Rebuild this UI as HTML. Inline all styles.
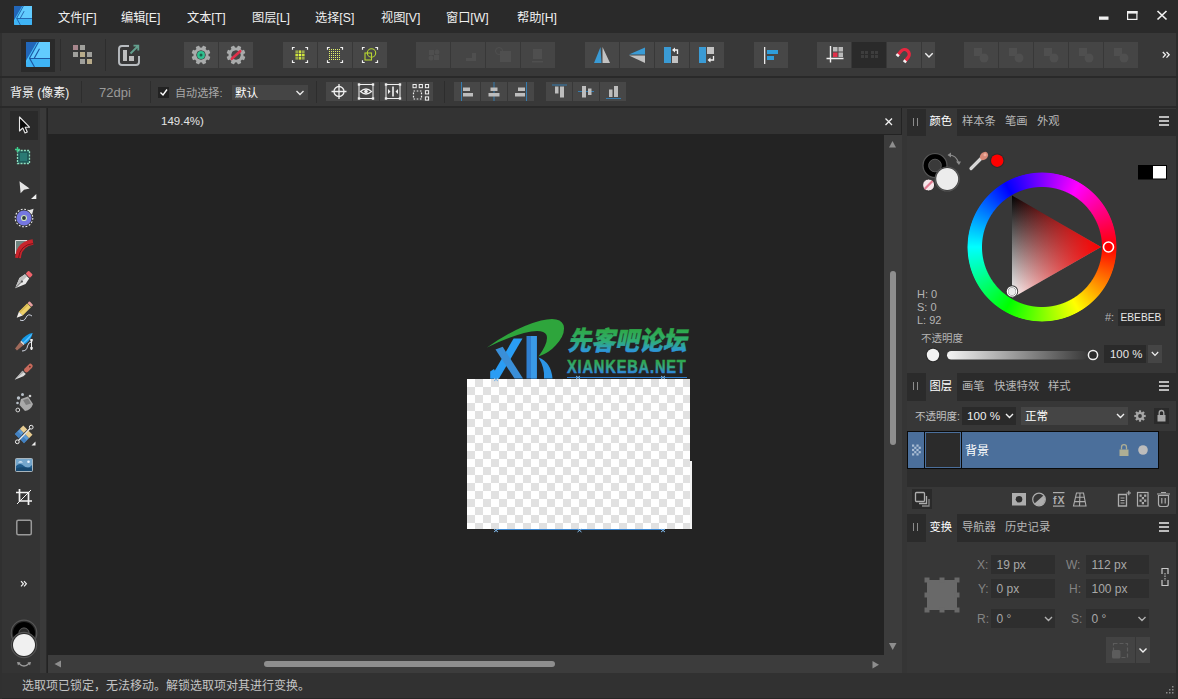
<!DOCTYPE html>
<html lang="zh-CN">
<head>
<meta charset="utf-8">
<title>Affinity Designer</title>
<style>
*{box-sizing:border-box;margin:0;padding:0}
html,body{width:1178px;height:699px;overflow:hidden;background:#383838}
body{position:relative;font-family:"Liberation Sans","Noto Sans CJK SC",sans-serif;font-size:12px;color:#e0e0e0}
.abs{position:absolute}
#titlebar{left:0;top:0;width:1178px;height:33px;background:#2a2a2a}
#titlebar .menu{position:absolute;top:10px;font-size:12.200px;line-height:16px;color:#f0f0f0;white-space:nowrap}
#toolbar{left:0;top:33px;width:1178px;height:43px;background:#383838}
#tbline{left:0;top:76px;width:1178px;height:2px;background:#292929;z-index:3}
#ctx{left:0;top:77px;width:1178px;height:29px;background:#383838}
#ctxline{left:0;top:106px;width:1178px;height:2px;background:#292929;z-index:3}
.btn{position:absolute;top:9px;height:26px;width:33px;background:#474747}
.btn.dis{background:#454545}
.cbtn{position:absolute;top:5px;height:19px;width:26px;background:#474747}
.sep{position:absolute;width:1px;background:#2d2d2d}
#tools{left:0;top:107px;width:47px;height:566px;background:linear-gradient(90deg,#343434 0,#343434 40px,#3a3a3a 40px,#3a3a3a 45.500px,#2b2b2b 45.500px)}
#canvaswrap{left:47px;top:107px;width:855px;height:566px;background:#232323}
#docbar{left:48px;top:108px;width:853px;height:26px;background:#333}
#vscroll{left:884px;top:135px;width:18px;height:520px;background:#3c3c3c}
#hscroll{left:48px;top:655px;width:836px;height:18px;background:#3c3c3c}
#corner{left:884px;top:655px;width:18px;height:18px;background:#3c3c3c}
#right{left:907px;top:107px;width:271px;height:566px;background:#373737}
#status{left:0;top:673px;width:1178px;height:26px;background:#313131}
.tabstrip{position:absolute;left:0;width:271px;height:28px;background:#2b2b2b}
.tab{position:absolute;top:0;height:28px;line-height:27px;font-size:11.300px;color:#b8b8b8;white-space:nowrap}
.tab.on{background:#373737;color:#fff;padding:0 4px}
#checker{background:conic-gradient(#e1e1e1 25%,#fff 0 50%,#e1e1e1 0 75%,#fff 0) 0 0/16px 16px}
.field{position:absolute;background:#2c2c2c;color:#e6e6e6;font-size:12px;line-height:20px;height:20px;padding-left:6px;white-space:nowrap}
.lbl{position:absolute;font-size:12px;color:#9a9a9a;white-space:nowrap}
</style>
</head>
<body>
<div id="titlebar" class="abs">
  <svg class="abs" style="left:14px;top:6px" width="18" height="19" viewBox="0 0 24 24" preserveAspectRatio="none">
<rect x="0" y="0" width="24" height="24" rx="1.500" fill="#45c1fb"/>
<path d="M0 0H11L0 18Z" fill="#2266b8"/>
<path d="M12.500 0H24V15.500H4Z" fill="#62ccff"/>
<path d="M3.500 16H24V22.500Q24 24 22.500 24H1.500Q0 24 0 22.500V20Z" fill="#3fb4f5"/>
<path d="M12.500 0L3.500 15.500L8.500 24M3.800 15.800H24M13.500 6.500L8.300 15.500" stroke="#1d58a4" stroke-width="1.100" fill="none"/>
</svg>
  <span class="menu" style="left:58px">文件[F]</span>
  <span class="menu" style="left:121px">编辑[E]</span>
  <span class="menu" style="left:187px">文本[T]</span>
  <span class="menu" style="left:252px">图层[L]</span>
  <span class="menu" style="left:315px">选择[S]</span>
  <span class="menu" style="left:381px">视图[V]</span>
  <span class="menu" style="left:446px">窗口[W]</span>
  <span class="menu" style="left:517px">帮助[H]</span>
<svg class="abs" style="left:1090px;top:0" width="88" height="33"><rect x="9" y="16.500" width="9.500" height="3.300" fill="#f0f0f0"/><rect x="37.600" y="11.600" width="9.300" height="7.800" fill="none" stroke="#f0f0f0" stroke-width="1.200"/><rect x="37" y="11" width="10.500" height="2.600" fill="#f0f0f0"/><path d="M67.500 11L76.500 19.500M76.500 11L67.500 19.500" stroke="#f0f0f0" stroke-width="1.700"/></svg>
</div>
<div id="toolbar" class="abs">
<div class="abs" style="left:21px;top:6px;width:34px;height:33px;background:#2a2a2a"></div>
<svg class="abs" style="left:26px;top:9px" width="24" height="25" viewBox="0 0 24 24" preserveAspectRatio="none">
<rect x="0" y="0" width="24" height="24" rx="1.500" fill="#45c1fb"/>
<path d="M0 0H11L0 18Z" fill="#2266b8"/>
<path d="M12.500 0H24V15.500H4Z" fill="#62ccff"/>
<path d="M3.500 16H24V22.500Q24 24 22.500 24H1.500Q0 24 0 22.500V20Z" fill="#3fb4f5"/>
<path d="M12.500 0L3.500 15.500L8.500 24M3.800 15.800H24M13.500 6.500L8.300 15.500" stroke="#1d58a4" stroke-width="1.100" fill="none"/>
</svg>
<div class="sep" style="left:60px;top:6px;height:32px"></div>
<div class="sep" style="left:105px;top:6px;height:32px"></div>
<svg class="abs" style="left:0;top:0" width="160" height="43"><rect x="73" y="12" width="5" height="5" fill="#a8868c"/><rect x="80" y="12" width="5" height="5" fill="#a0a09c"/><rect x="73" y="19" width="5" height="5" fill="#a0a09c"/><rect x="80" y="19" width="5" height="5" fill="#b8ab8a"/><rect x="87" y="19" width="5" height="5" fill="#a0a09c"/><rect x="80" y="26" width="5" height="5" fill="#a0a09c"/><rect x="87" y="26" width="5" height="5" fill="#b8ab8a"/><path d="M129 13H122Q119 13 119 16V29Q119 32 122 32H136Q139 32 139 29V23" fill="none" stroke="#b8bcc0" stroke-width="1.9"/><rect x="123" y="17" width="4" height="11" fill="#bdbdbd"/><rect x="129" y="23" width="5" height="5" fill="#bdbdbd"/><path d="M130.500 20.500L138 13M133.500 12.700H138.300V17.500" fill="none" stroke="#63a08e" stroke-width="1.800"/></svg>
<div class="btn " style="left:184px;width:34px"></div>
<div class="btn " style="left:219px;width:34px"></div>
<div class="btn " style="left:283px;width:34px"></div>
<div class="btn " style="left:318px;width:34px"></div>
<div class="btn " style="left:353px;width:34px"></div>
<div class="btn " style="left:585px;width:34px"></div>
<div class="btn " style="left:620px;width:34px"></div>
<div class="btn " style="left:655px;width:34px"></div>
<div class="btn " style="left:690px;width:34px"></div>
<div class="btn " style="left:754px;width:34px"></div>
<div class="btn " style="left:817px;width:34px"></div>
<div class="btn " style="left:887px;width:34px"></div>
<div class="btn dis" style="left:416px;width:34px"></div>
<div class="btn dis" style="left:451px;width:34px"></div>
<div class="btn dis" style="left:486px;width:34px"></div>
<div class="btn dis" style="left:521px;width:34px"></div>
<div class="btn dis" style="left:964px;width:34px"></div>
<div class="btn dis" style="left:999px;width:34px"></div>
<div class="btn dis" style="left:1034px;width:34px"></div>
<div class="btn dis" style="left:1069px;width:34px"></div>
<div class="btn dis" style="left:1104px;width:34px"></div>
<div class="btn" style="left:852px;width:34px;background:#2a2a2a"></div>
<div class="btn" style="left:922px;width:13px"></div>
<svg id="tbicons" class="abs" style="left:0;top:0" width="1178" height="43"><rect x="199.1" y="12.6" width="3.800" height="4.500" rx="0.700" fill="#a9abab" transform="rotate(22.5 201 22)"/><rect x="199.1" y="12.6" width="3.800" height="4.500" rx="0.700" fill="#a9abab" transform="rotate(67.5 201 22)"/><rect x="199.1" y="12.6" width="3.800" height="4.500" rx="0.700" fill="#a9abab" transform="rotate(112.5 201 22)"/><rect x="199.1" y="12.6" width="3.800" height="4.500" rx="0.700" fill="#a9abab" transform="rotate(157.5 201 22)"/><rect x="199.1" y="12.6" width="3.800" height="4.500" rx="0.700" fill="#a9abab" transform="rotate(202.5 201 22)"/><rect x="199.1" y="12.6" width="3.800" height="4.500" rx="0.700" fill="#a9abab" transform="rotate(247.5 201 22)"/><rect x="199.1" y="12.6" width="3.800" height="4.500" rx="0.700" fill="#a9abab" transform="rotate(292.5 201 22)"/><rect x="199.1" y="12.6" width="3.800" height="4.500" rx="0.700" fill="#a9abab" transform="rotate(337.5 201 22)"/><circle cx="201" cy="22" r="6.200" fill="none" stroke="#a9abab" stroke-width="2.800"/><circle cx="201" cy="22" r="3.900" fill="#2fbf8f"/><circle cx="201" cy="22" r="1.500" fill="#1d5f4b"/><rect x="234.1" y="12.6" width="3.800" height="4.500" rx="0.700" fill="#a9abab" transform="rotate(22.5 236 22)"/><rect x="234.1" y="12.6" width="3.800" height="4.500" rx="0.700" fill="#a9abab" transform="rotate(67.5 236 22)"/><rect x="234.1" y="12.6" width="3.800" height="4.500" rx="0.700" fill="#a9abab" transform="rotate(112.5 236 22)"/><rect x="234.1" y="12.6" width="3.800" height="4.500" rx="0.700" fill="#a9abab" transform="rotate(157.5 236 22)"/><rect x="234.1" y="12.6" width="3.800" height="4.500" rx="0.700" fill="#a9abab" transform="rotate(202.5 236 22)"/><rect x="234.1" y="12.6" width="3.800" height="4.500" rx="0.700" fill="#a9abab" transform="rotate(247.5 236 22)"/><rect x="234.1" y="12.6" width="3.800" height="4.500" rx="0.700" fill="#a9abab" transform="rotate(292.5 236 22)"/><rect x="234.1" y="12.6" width="3.800" height="4.500" rx="0.700" fill="#a9abab" transform="rotate(337.5 236 22)"/><circle cx="236" cy="22" r="6.200" fill="none" stroke="#a9abab" stroke-width="2.800"/><path d="M231.800 25.800L240.200 18.200" stroke="#e0304a" stroke-width="2.600" stroke-linecap="round"/><path d="M294.7 14.5H292.5V16.7M294.7 29.5H292.5V27.3M305.3 14.5H307.5V16.7M305.3 29.5H307.5V27.3" fill="none" stroke="#f4f4f4" stroke-width="1.2"/><rect x="295.4" y="17.4" width="2.600" height="2.600" fill="#9aa84e"/><rect x="295.4" y="20.7" width="2.600" height="2.600" fill="#cfe63a"/><rect x="295.4" y="24.0" width="2.600" height="2.600" fill="#9aa84e"/><rect x="298.7" y="17.4" width="2.600" height="2.600" fill="#cfe63a"/><rect x="298.7" y="20.7" width="2.600" height="2.600" fill="#eaff50"/><rect x="298.7" y="24.0" width="2.600" height="2.600" fill="#cfe63a"/><rect x="302.0" y="17.4" width="2.600" height="2.600" fill="#9aa84e"/><rect x="302.0" y="20.7" width="2.600" height="2.600" fill="#cfe63a"/><rect x="302.0" y="24.0" width="2.600" height="2.600" fill="#9aa84e"/><path d="M329.7 14.5H327.5V16.7M329.7 29.5H327.5V27.3M340.3 14.5H342.5V16.7M340.3 29.5H342.5V27.3" fill="none" stroke="#f4f4f4" stroke-width="1.2"/><rect x="329" y="16" width="1" height="1" fill="#e2f26a"/><rect x="329" y="18" width="1" height="1" fill="#e2f26a"/><rect x="329" y="20" width="1" height="1" fill="#e2f26a"/><rect x="329" y="22" width="1" height="1" fill="#e2f26a"/><rect x="329" y="24" width="1" height="1" fill="#e2f26a"/><rect x="329" y="26" width="1" height="1" fill="#e2f26a"/><rect x="331" y="16" width="1" height="1" fill="#e2f26a"/><rect x="331" y="18" width="1" height="1" fill="#e2f26a"/><rect x="331" y="20" width="1" height="1" fill="#e2f26a"/><rect x="331" y="22" width="1" height="1" fill="#e2f26a"/><rect x="331" y="24" width="1" height="1" fill="#e2f26a"/><rect x="331" y="26" width="1" height="1" fill="#e2f26a"/><rect x="333" y="16" width="1" height="1" fill="#e2f26a"/><rect x="333" y="18" width="1" height="1" fill="#e2f26a"/><rect x="333" y="20" width="1" height="1" fill="#e2f26a"/><rect x="333" y="22" width="1" height="1" fill="#e2f26a"/><rect x="333" y="24" width="1" height="1" fill="#e2f26a"/><rect x="333" y="26" width="1" height="1" fill="#e2f26a"/><rect x="335" y="16" width="1" height="1" fill="#e2f26a"/><rect x="335" y="18" width="1" height="1" fill="#e2f26a"/><rect x="335" y="20" width="1" height="1" fill="#e2f26a"/><rect x="335" y="22" width="1" height="1" fill="#e2f26a"/><rect x="335" y="24" width="1" height="1" fill="#e2f26a"/><rect x="335" y="26" width="1" height="1" fill="#e2f26a"/><rect x="337" y="16" width="1" height="1" fill="#e2f26a"/><rect x="337" y="18" width="1" height="1" fill="#e2f26a"/><rect x="337" y="20" width="1" height="1" fill="#e2f26a"/><rect x="337" y="22" width="1" height="1" fill="#e2f26a"/><rect x="337" y="24" width="1" height="1" fill="#e2f26a"/><rect x="337" y="26" width="1" height="1" fill="#e2f26a"/><rect x="339" y="16" width="1" height="1" fill="#e2f26a"/><rect x="339" y="18" width="1" height="1" fill="#e2f26a"/><rect x="339" y="20" width="1" height="1" fill="#e2f26a"/><rect x="339" y="22" width="1" height="1" fill="#e2f26a"/><rect x="339" y="24" width="1" height="1" fill="#e2f26a"/><rect x="339" y="26" width="1" height="1" fill="#e2f26a"/><path d="M364.7 14.5H362.5V16.7M364.7 29.5H362.5V27.3M375.3 14.5H377.5V16.7M375.3 29.5H377.5V27.3" fill="none" stroke="#f4f4f4" stroke-width="1.2"/><rect x="365" y="20" width="6.500" height="7" fill="none" stroke="#b7d532" stroke-width="1.1"/><circle cx="371.5" cy="20" r="4.200" fill="none" stroke="#b7d532" stroke-width="1.1"/><rect x="429" y="17" width="5" height="5" fill="#4f4f4f"/><rect x="434" y="22" width="5" height="5" fill="#4f4f4f"/><circle cx="431" cy="25" r="2.500" fill="#4f4f4f"/><circle cx="437" cy="19" r="2.500" fill="#4f4f4f"/><rect x="472" y="20" width="4" height="8" fill="#4f4f4f"/><rect x="466" y="25" width="6" height="3" fill="#4f4f4f"/><rect x="500" y="18" width="11" height="11" fill="#4f4f4f"/><circle cx="499" cy="18" r="3.500" fill="none" stroke="#4f4f4f" stroke-width="1"/><rect x="533" y="16" width="9" height="10" fill="#4f4f4f"/><rect x="532" y="28" width="11" height="1.500" fill="#4f4f4f"/><rect x="974" y="15" width="8" height="8" fill="#4f4f4f"/><circle cx="984" cy="25" r="4.500" fill="#4f4f4f"/><rect x="1009" y="15" width="8" height="8" fill="#4f4f4f"/><circle cx="1019" cy="25" r="4.500" fill="#4f4f4f"/><rect x="1044" y="15" width="8" height="8" fill="#4f4f4f"/><circle cx="1054" cy="25" r="4.500" fill="#4f4f4f"/><rect x="1079" y="15" width="8" height="8" fill="#4f4f4f"/><circle cx="1089" cy="25" r="4.500" fill="#4f4f4f"/><rect x="1114" y="15" width="8" height="8" fill="#4f4f4f"/><circle cx="1124" cy="25" r="4.500" fill="#4f4f4f"/><path d="M600.500 14L601.500 30H594Z" fill="#3a9bd5"/><path d="M602.500 14L610 30H602.500Z" fill="#c2c2c2"/><path d="M645 14.500V21.500L629 21.500Z" fill="#3a9bd5"/><path d="M645 22.500V30L629 22.500Z" fill="#c2c2c2"/><rect x="664" y="14" width="7" height="16" fill="#3a9bd5"/><rect x="672" y="23" width="6" height="7" fill="#c2c2c2"/><path d="M677.500 21V17H673.500" fill="none" stroke="#f0f0f0" stroke-width="1.3"/><path d="M672 17L675 14.500V19.500Z" fill="#f0f0f0"/><rect x="699" y="14" width="7" height="16" fill="#3a9bd5"/><rect x="707" y="14" width="7" height="7" fill="#c2c2c2"/><path d="M713.500 23V27H709.500" fill="none" stroke="#f0f0f0" stroke-width="1.3"/><path d="M707.500 27L710.500 24.500V29.500Z" fill="#f0f0f0"/><rect x="764" y="14" width="1.300" height="17" fill="#e8e8e8"/><rect x="767" y="17" width="11" height="4" fill="#2f9edb"/><rect x="767" y="23" width="7" height="4" fill="#2f9edb"/><path d="M830.500 13V29.500M826.500 25.500H843.500" stroke="#f0f0f0" stroke-width="1.400" fill="none"/><rect x="833" y="14" width="4.500" height="4.500" fill="#b9b9b9"/><rect x="838.500" y="14" width="4.500" height="4.500" fill="#b9b9b9"/><rect x="833" y="19.500" width="4.500" height="4.500" fill="#e0304a"/><rect x="838.500" y="19.500" width="4.500" height="4.500" fill="#b9b9b9"/><g fill="#3d3d3d"><rect x="861" y="18" width="3" height="3"/><rect x="865" y="18" width="3" height="3"/><rect x="861" y="22" width="3" height="3"/><rect x="865" y="22" width="3" height="3"/><rect x="871" y="18" width="3" height="3"/><rect x="875" y="18" width="3" height="3"/><rect x="871" y="22" width="3" height="3"/><rect x="875" y="22" width="3" height="3"/></g><g transform="translate(904 22) rotate(40) scale(.86) translate(-904 -22)"><path d="M898.500 27V21A5.500 5.500 0 0 1 909.500 21V27" fill="none" stroke="#e8263f" stroke-width="3.800"/><rect x="896.600" y="25.500" width="3.800" height="2.800" fill="#f2f2f2"/><rect x="907.600" y="25.500" width="3.800" height="2.800" fill="#f2f2f2"/></g><path d="M925.300 20.300L929 24L932.700 20.300" fill="none" stroke="#f0f0f0" stroke-width="1.400"/><path d="M1162.800 19L1165.500 21.800L1162.800 24.600M1166.500 19L1169.200 21.800L1166.500 24.600" fill="none" stroke="#f0f0f0" stroke-width="1.300"/></svg>
</div>
<div id="tbline" class="abs"></div>
<div id="ctx" class="abs">
<span class="abs" style="left:10px;top:7px;font-size:12px;line-height:18px;color:#f2f2f2;white-space:nowrap">背景 (像素)</span>
<div class="sep" style="left:81px;top:4px;height:22px"></div>
<span class="abs" style="left:99px;top:7px;font-size:13px;line-height:18px;color:#9a9a9a;white-space:nowrap">72dpi</span>
<div class="sep" style="left:150px;top:4px;height:22px"></div>
<div class="abs" style="left:158px;top:10px;width:11px;height:11px;background:#222"></div>
<span class="abs" style="left:175px;top:7px;font-size:11.100px;line-height:18px;color:#a8a8a8;white-space:nowrap">自动选择:</span>
<div class="abs" style="left:232px;top:8px;width:76px;height:15px;background:#454545"></div>
<span class="abs" style="left:235px;top:7px;font-size:11.600px;line-height:18px;color:#fff;white-space:nowrap">默认</span>
<div class="sep" style="left:316px;top:4px;height:22px"></div>
<div class="sep" style="left:444px;top:4px;height:22px"></div>
<div class="cbtn" style="left:326px"></div>
<div class="cbtn" style="left:353px"></div>
<div class="cbtn" style="left:380px"></div>
<div class="cbtn" style="left:407px"></div>
<div class="cbtn" style="left:454px"></div>
<div class="cbtn" style="left:481px"></div>
<div class="cbtn" style="left:508px"></div>
<div class="cbtn" style="left:546px"></div>
<div class="cbtn" style="left:573px"></div>
<div class="cbtn" style="left:600px"></div>
<svg class="abs" style="left:0;top:0" width="1178" height="29"><path d="M160.500 15.500L163 18L167 12.500" fill="none" stroke="#fff" stroke-width="1.4"/><path d="M296.500 14L300 17.500L303.500 14" fill="none" stroke="#e8e8e8" stroke-width="1.4"/><circle cx="339" cy="14.500" r="5" fill="none" stroke="#f0f0f0" stroke-width="1.3"/><path d="M339 7V22M331.500 14.500H346.500" stroke="#f0f0f0" stroke-width="1.300"/><rect x="359" y="7.5" width="14" height="14" fill="none" stroke="#f0f0f0" stroke-width="1"/><rect x="357.8" y="6.3" width="2.400" height="2.400" fill="#f0f0f0"/><rect x="357.8" y="20.3" width="2.400" height="2.400" fill="#f0f0f0"/><rect x="371.8" y="6.3" width="2.400" height="2.400" fill="#f0f0f0"/><rect x="371.8" y="20.3" width="2.400" height="2.400" fill="#f0f0f0"/><path d="M360.500 14.500Q366 9.500 371.500 14.500Q366 19.500 360.500 14.500Z" fill="none" stroke="#f0f0f0" stroke-width="1.200"/><circle cx="366" cy="14.500" r="1.800" fill="#f0f0f0"/><rect x="386" y="7.5" width="14" height="14" fill="none" stroke="#f0f0f0" stroke-width="1"/><rect x="384.8" y="6.3" width="2.400" height="2.400" fill="#f0f0f0"/><rect x="384.8" y="20.3" width="2.400" height="2.400" fill="#f0f0f0"/><rect x="398.8" y="6.3" width="2.400" height="2.400" fill="#f0f0f0"/><rect x="398.8" y="20.3" width="2.400" height="2.400" fill="#f0f0f0"/><rect x="392.200" y="9.500" width="1.600" height="10" fill="#f0f0f0"/><path d="M388 12L390.500 14.500L388 17ZM398 12L395.500 14.500L398 17Z" fill="#f0f0f0"/><rect x="413.0" y="7.500" width="3.200" height="3.200" fill="none" stroke="#f0f0f0" stroke-width="1"/><rect x="419.2" y="7.500" width="3.200" height="3.200" fill="none" stroke="#f0f0f0" stroke-width="1"/><rect x="425.4" y="7.500" width="3.200" height="3.200" fill="none" stroke="#f0f0f0" stroke-width="1"/><rect x="425.4" y="13.7" width="3.200" height="3.200" fill="none" stroke="#f0f0f0" stroke-width="1"/><rect x="425.4" y="19.9" width="3.200" height="3.200" fill="none" stroke="#f0f0f0" stroke-width="1"/><rect x="413.500" y="14" width="8" height="8" fill="none" stroke="#f0f0f0" stroke-width="1.200" stroke-dasharray="1.6 1.6"/><rect x="461" y="5" width="1" height="19" fill="#357cb0"/><rect x="463" y="10.500" width="7" height="3.500" fill="#bdbdbd"/><rect x="463" y="16" width="10" height="3.500" fill="#bdbdbd"/><rect x="493.500" y="5" width="1" height="19" fill="#357cb0"/><rect x="490.500" y="10.500" width="7" height="3.500" fill="#bdbdbd"/><rect x="488.500" y="16" width="11" height="3.500" fill="#bdbdbd"/><rect x="526" y="5" width="1" height="19" fill="#357cb0"/><rect x="518" y="10.500" width="7" height="3.500" fill="#bdbdbd"/><rect x="515" y="16" width="10" height="3.500" fill="#bdbdbd"/><rect x="552" y="7.500" width="15" height="1" fill="#357cb0"/><rect x="555" y="9.500" width="3.500" height="7" fill="#bdbdbd"/><rect x="560" y="9.500" width="4" height="11" fill="#bdbdbd"/><rect x="578" y="14" width="16" height="1" fill="#357cb0"/><rect x="582" y="9" width="4" height="11.500" fill="#bdbdbd"/><rect x="588" y="11.500" width="3.500" height="6.500" fill="#bdbdbd"/><rect x="606" y="21" width="15" height="1" fill="#357cb0"/><rect x="609" y="12.500" width="3.500" height="7.500" fill="#bdbdbd"/><rect x="614" y="9" width="4" height="11" fill="#bdbdbd"/></svg>
</div>
<div id="ctxline" class="abs"></div>
<div id="tools" class="abs"><div class="abs" style="left:10px;top:4px;width:28px;height:29px;background:#2a2a2a"></div><svg class="abs" style="left:0;top:0" width="48" height="568"><path d="M19.500 10V24L22.800 21L25 26L27.300 25L25.200 20.200000000000003H29.500Z" fill="#0a0a0a" stroke="#e8e8e8" stroke-width="1.1" stroke-linejoin="round"/><rect x="17.500" y="43.5" width="12" height="13" fill="#1f5a58" stroke="#8fe0c0" stroke-width="1.3" stroke-dasharray="2 1.2"/><rect x="20" y="46" width="7" height="8" fill="#2a7a74"/><path d="M15 42.5H20M17.500 40V45" stroke="#3fd08f" stroke-width="1.4"/><path d="M19.500 74.3L29.600 81.4L24 82.8L20.600 86.2Z" fill="#e4e4e4"/><path d="M36.300 87V92H31Z" fill="#efefef"/><circle cx="24" cy="111" r="8.800" fill="none" stroke="#e8e8e8" stroke-width="1.100" stroke-dasharray="1.800 1.650"/><circle cx="24" cy="111" r="5.200" fill="none" stroke="#7577e0" stroke-width="4.800"/><circle cx="24" cy="111" r="2.500" fill="#2e3a36" stroke="#cfe3c8" stroke-width="1.200"/><path d="M28 103.5L33.600 101.8L32 107.8Z" fill="#e6e6e6"/><path d="M15.500 133.5H27L15.500 147Z" fill="#6f8480" stroke="#e0e0e0" stroke-width="1"/><path d="M18 151Q19 137 33 135" fill="none" stroke="#c8242c" stroke-width="5.800"/><path d="M18.500 151Q20 138 33 136.5" fill="none" stroke="#7e1218" stroke-width="1"/><g transform="translate(15.500 180.5) scale(.86) translate(-15.500 -180.5) rotate(45 24 172.5)"><rect x="20.500" y="159.5" width="7" height="5" rx="1.2" fill="#f0646c"/><path d="M20.500 165.5H27.500L29 173L24 185L19 173Z" fill="#e9e9e9"/><path d="M24 185L19 173L20.500 165.5H24Z" fill="#bdbdbd"/><path d="M24 184V175" stroke="#555" stroke-width="1"/><circle cx="24" cy="174" r="1.300" fill="#555"/></g><g transform="translate(16.500 210.5) scale(.9) translate(-16.500 -210.5) rotate(45 24.500 203)"><rect x="21.500" y="191" width="6" height="3" rx="1" fill="#e8a0a0"/><rect x="21.500" y="194.5" width="6" height="13" fill="#ecd06a"/><rect x="21.500" y="194.5" width="2" height="13" fill="#d8b850"/><path d="M21.500 207.5H27.500L24.500 214Z" fill="#f3f0ea"/></g><path d="M20 213Q24 215 26 210.5T32 209" fill="none" stroke="#cfd4e0" stroke-width="1"/><g transform="translate(16 242) scale(.9) translate(-16 -242) rotate(45 24.500 234)"><path d="M24.500 220Q29 226 27.500 235H21.500Q20 226 24.500 220Z" fill="#159be8"/><path d="M24.500 220Q27 226 26 235H24.500Z" fill="#5fc0ff"/><rect x="22" y="235" width="5" height="2" fill="#d8d8d8"/><path d="M22 237H27L26 246H23Z" fill="#a06a5a"/></g><path d="M22 244Q27 244 27.500 239Q28.500 235 31.500 235" fill="none" stroke="#d6dae6" stroke-width="1"/><rect x="30.300" y="232" width="2.400" height="2.400" fill="#f0f0f0"/><rect x="30.300" y="240" width="2.400" height="2.400" fill="#f0f0f0"/><path d="M31.500 233V243" stroke="#f0f0f0" stroke-width="1"/><g transform="translate(24 266) scale(.85) translate(-24 -266) rotate(45 24 265)"><rect x="21.500" y="252" width="5.500" height="12" rx="2.600" fill="#c86a5c"/><circle cx="24.200" cy="255.5" r="1" fill="#5a2a22"/><path d="M21.500 265H27V269L22.500 279Z" fill="#dcdcdc"/><path d="M21.500 265H24L22.500 279Z" fill="#a8a8a8"/></g><path d="M21 292L28 289.5L33 297Q31 303 25 304L19.500 298Z" fill="#a9a9a9"/><path d="M23 293L28 291.5L31 296.5L26 298Z" fill="#7d7d7d"/><circle cx="18.500" cy="291" r="1.700" fill="#b8c0c8"/><circle cx="22.500" cy="287.5" r="1.500" fill="#b8c0c8"/><circle cx="17.500" cy="296" r="1.300" fill="#b8c0c8"/><circle cx="30" cy="289" r="1.300" fill="#d0d0d0"/><circle cx="17.800" cy="303" r="1.900" fill="none" stroke="#d8d8d8" stroke-width="1"/><g transform="rotate(45 24 327)"><rect x="17.500" y="321.5" width="5.500" height="5" fill="#e8cd92"/><rect x="17.500" y="326.5" width="5.500" height="7" fill="#5c9ad6"/><rect x="25" y="321.5" width="5.500" height="5" fill="#e8cd92"/><rect x="25" y="326.5" width="5.500" height="7" fill="#5c9ad6"/><rect x="17.500" y="329.5" width="13" height="4" fill="#2f6eb0" opacity=".55"/></g><path d="M18 334L30.500 321" stroke="#f0f0f0" stroke-width="1.2"/><circle cx="17.300" cy="334.8" r="1.900" fill="#383838" stroke="#f0f0f0" stroke-width="1"/><circle cx="31.200" cy="320.2" r="1.900" fill="#383838" stroke="#f0f0f0" stroke-width="1"/><path d="M35.500 334.5V338.5H31.500Z" fill="#efefef"/><rect x="15.500" y="351.5" width="17" height="13" rx="1" fill="#74a6cc" stroke="#a8b4bc" stroke-width="1"/><path d="M16 359Q20 355 24 359T32 358V364H16Z" fill="#1e5a8a"/><path d="M16 361.5Q22 359 32 361.5V364H16Z" fill="#164870"/><circle cx="28.500" cy="354.8" r="1.300" fill="#eaf4ff"/><path d="M18 355.5Q20.500 353 23 355.5Z" fill="#eaf4ff"/><path d="M19.500 382V394H32M16 385.5H28.500V398" fill="none" stroke="#f2f2f2" stroke-width="1.700"/><path d="M17 397L31 383" stroke="#f2f2f2" stroke-width="1"/><rect x="16.800" y="413.29999999999995" width="14.500" height="14.500" rx="1.500" fill="#2c2c2c" stroke="#9a9a9a" stroke-width="1.500"/><path d="M21 474.20000000000005L23.400 476.79999999999995L21 479.4M24 474.20000000000005L26.400 476.79999999999995L24 479.4" fill="none" stroke="#f0f0f0" stroke-width="1.200"/><circle cx="24" cy="526" r="12.800" fill="#2a2a2a" stroke="#555" stroke-width="1.200"/><circle cx="24" cy="526" r="8.300" fill="none" stroke="#000" stroke-width="5.500"/><circle cx="24" cy="526" r="5" fill="none" stroke="#555" stroke-width="1"/><circle cx="24" cy="538" r="12.600" fill="#2a2a2a" stroke="#555" stroke-width="1.200"/><circle cx="24" cy="538" r="11" fill="#f0f0f0"/><path d="M18.500 556Q24 562 29.500 556" fill="none" stroke="#9a9a9a" stroke-width="1.300"/><path d="M17 555L20.500 555.5L18 558.5ZM31 555L27.500 555.5L30 558.5Z" fill="#9a9a9a"/></svg></div>
<div id="canvaswrap" class="abs"><div class="abs" id="checker" style="left:420px;top:272px;width:223px;height:150px"></div>
<div class="abs" style="left:643px;top:354px;width:2px;height:68px;background:#f2f2f2"></div>
<svg class="abs" style="left:431px;top:200px" width="270" height="230" viewBox="478 307 270 230">
<defs>
<linearGradient id="gt" x1="0" y1="0" x2="0" y2="1"><stop offset=".15" stop-color="#2ea84a"/><stop offset=".5" stop-color="#2fae70"/><stop offset=".78" stop-color="#2d9cc4"/><stop offset=".95" stop-color="#2c8cf0"/></linearGradient>
<linearGradient id="ge" x1="0" y1="0" x2="0" y2="1"><stop offset=".2" stop-color="#2fa84c"/><stop offset=".5" stop-color="#36a884"/><stop offset=".76" stop-color="#2f86d8"/></linearGradient>
</defs>
<path d="M487 347.500Q516 327 541 320.500Q560 316 563.500 325Q566 334 556 345Q549 353 538.500 356.500Q549 342 546.500 335Q543 328 524 333Q506 338 487 347.500Z" fill="#2ea53c"/>
<path d="M513.600 338.500H522.500L499 378.500H490.200Z" fill="#2a9df4"/>
<path d="M495.500 349.500L502.700 346.800L523 378.500H514.500Z" fill="#3a8fd8"/>
<path d="M490.200 378.500V371.500L494 369L499 378.500Z" fill="#2a9df4"/>
<rect x="526.500" y="336" width="10.300" height="42.500" fill="#2f7fd0"/><rect x="531" y="336" width="5.800" height="42.500" fill="#3a9ae6"/>
<path d="M538.500 357.500Q551 362 552.500 378.500H544Q545 368 538.500 357.500Z" fill="#2c95e6"/>
<text x="0" y="0" font-family="'Liberation Sans','Noto Sans CJK SC',sans-serif" font-size="26" font-weight="900" fill="url(#gt)" stroke="url(#gt)" stroke-width=".4" transform="translate(567.500 349.700) skewX(-12)" textLength="119" lengthAdjust="spacingAndGlyphs">先客吧论坛</text>
<g transform="translate(567 373.300) scale(.8 1)"><text x="0" y="0" font-family="'Liberation Sans',sans-serif" font-size="18.300" font-weight="bold" fill="url(#ge)" stroke="url(#ge)" stroke-width=".5" textLength="148.500" lengthAdjust="spacing">XIANKEBA.NET</text></g>
<path d="M567 377.500H687" stroke="#2f7fd0" stroke-width="1"/>
<path d="M496 529.500H664" stroke="#3a86d0" stroke-width="1"/>
<g stroke="#7fb8ea" stroke-width="1" fill="none">
<path d="M494 378l4 3m0-3l-4 3M576 376l4 3m0-3l-4 3M661 376l4 3m0-3l-4 3"/>
<path d="M494 529l4 3m0-3l-4 3M577.500 529l4 3m0-3l-4 3M661 529l4 3m0-3l-4 3"/>
</g>
</svg></div>
<div id="docbar" class="abs"><span class="abs" style="left:113px;top:5px;font-size:11.500px;line-height:16px;color:#e4e4e4;white-space:nowrap">149.4%)</span><svg class="abs" style="left:835px;top:8px" width="12" height="12"><path d="M2.500 2.500L9 9M9 2.500L2.500 9" stroke="#f0f0f0" stroke-width="1.300"/></svg></div>
<div id="vscroll" class="abs"><svg class="abs" style="left:0;top:0" width="17" height="520"><path d="M5 12.500H12L8.500 6Z" fill="#8e8e8e"/><path d="M5 508H12.500L8.700 515Z" fill="#8e8e8e"/><rect x="6" y="136" width="6" height="174" rx="3" fill="#8e8e8e"/></svg></div>
<div id="hscroll" class="abs"><svg class="abs" style="left:0;top:0" width="836" height="18"><path d="M13 5.500V12.500L6.500 9Z" fill="#8e8e8e"/><path d="M824.500 6V13.500L831 9.700Z" fill="#8e8e8e"/><rect x="216" y="6" width="291" height="6" rx="3" fill="#8e8e8e"/></svg></div>
<div id="corner" class="abs"></div>
<div class="abs" style="left:902px;top:108px;width:5px;height:565px;background:#353535"></div>
<div id="right" class="abs">
<div class="tabstrip" style="left:0;top:2px;height:27px"><div class="abs" style="left:6px;top:9px;width:1px;height:8px;background:#8c8c8c"></div><div class="abs" style="left:10px;top:9px;width:1px;height:8px;background:#8c8c8c"></div><div class="tab on" style="left:19px;width:31px;height:27px;line-height:25px;padding:0 0 0 3.500px">颜色</div><div class="tab" style="left:55px;height:27px;line-height:25px">样本条</div><div class="tab" style="left:98px;height:27px;line-height:25px">笔画</div><div class="tab" style="left:130px;height:27px;line-height:25px">外观</div><div class="abs" style="left:252px;top:7px;width:10px;height:2px;background:#bcbcbc;box-shadow:0 4px 0 #bcbcbc,0 8px 0 #bcbcbc"></div></div>
<div class="tabstrip" style="left:0;top:266px;height:28px"><div class="abs" style="left:6px;top:9px;width:1px;height:8px;background:#8c8c8c"></div><div class="abs" style="left:10px;top:9px;width:1px;height:8px;background:#8c8c8c"></div><div class="tab on" style="left:19px;width:31px;height:28px;line-height:26px;padding:0 0 0 3.500px">图层</div><div class="tab" style="left:55px;height:28px;line-height:26px">画笔</div><div class="tab" style="left:87px;height:28px;line-height:26px">快速特效</div><div class="tab" style="left:141px;height:28px;line-height:26px">样式</div><div class="abs" style="left:252px;top:8px;width:10px;height:2px;background:#bcbcbc;box-shadow:0 4px 0 #bcbcbc,0 8px 0 #bcbcbc"></div></div>
<div class="tabstrip" style="left:0;top:407px;height:28px"><div class="abs" style="left:6px;top:9px;width:1px;height:8px;background:#8c8c8c"></div><div class="abs" style="left:10px;top:9px;width:1px;height:8px;background:#8c8c8c"></div><div class="tab on" style="left:19px;width:31px;height:28px;line-height:26px;padding:0 0 0 3.500px">变换</div><div class="tab" style="left:55px;height:28px;line-height:26px">导航器</div><div class="tab" style="left:98px;height:28px;line-height:26px">历史记录</div><div class="abs" style="left:252px;top:8px;width:10px;height:2px;background:#bcbcbc;box-shadow:0 4px 0 #bcbcbc,0 8px 0 #bcbcbc"></div></div>
<div class="abs" style="left:60px;top:65px;width:150px;height:150px;border-radius:50%;background:conic-gradient(from 90deg,#f00,#ff0,#0f0,#0ff,#00f,#f0f,#f00);-webkit-mask:radial-gradient(circle,transparent 59.500px,#000 60.500px,#000 74px,transparent 75px);mask:radial-gradient(circle,transparent 59.500px,#000 60.500px,#000 74px,transparent 75px)"></div>
<div class="field" style="left:211px;top:202px;width:47px;height:17px;line-height:17px;padding-left:2.500px;font-size:10.200px;background:#2a2a2a">EBEBEB</div>
<div class="lbl" style="left:198px;top:202px;line-height:17px;font-size:11px;color:#b4b4b4">#:</div>
<div class="field" style="left:197px;top:238px;width:42px;height:18px;line-height:18px;padding-left:6px;font-size:11.400px;background:#2a2a2a">100 %</div>
<div class="abs" style="left:241px;top:238px;width:14px;height:18px;background:#454545"></div>
<div class="lbl" style="left:10px;top:180px;line-height:14px;font-size:11px;color:#b4b4b4">H: 0</div>
<div class="lbl" style="left:10px;top:193px;line-height:14px;font-size:11px;color:#b4b4b4">S: 0</div>
<div class="lbl" style="left:10px;top:206px;line-height:14px;font-size:11px;color:#b4b4b4">L: 92</div>
<div class="lbl" style="left:14px;top:224px;line-height:14px;font-size:10.500px;color:#b4b4b4">不透明度</div>
<svg class="abs" style="left:0;top:0" width="271" height="270" viewBox="907 107 271 270"><defs>
<linearGradient id="tw" x1="0" y1="0" x2="0" y2="1"><stop offset="0" stop-color="#000"/><stop offset="1" stop-color="#fff"/></linearGradient>
<linearGradient id="tr" x1="0" y1="0" x2="1" y2="0"><stop offset="0" stop-color="#f00" stop-opacity="0"/><stop offset="1" stop-color="#f00" stop-opacity="1"/></linearGradient>
<linearGradient id="op" x1="0" y1="0" x2="1" y2="0"><stop offset="0" stop-color="#f4f4f4"/><stop offset="1" stop-color="#3a3a3a"/></linearGradient>
</defs><path d="M1012 195.500L1101 247L1012 298Z" fill="url(#tw)"/><path d="M1012 195.500L1101 247L1012 298Z" fill="url(#tr)"/><circle cx="1108.500" cy="247" r="5" fill="#f00" stroke="#fff" stroke-width="1.600"/><circle cx="1012" cy="291.500" r="5" fill="#ebebeb" stroke="#3a3a3a" stroke-width="2.400"/><circle cx="1012" cy="291.500" r="4.600" fill="none" stroke="#fff" stroke-width="1.300"/><circle cx="935" cy="165.500" r="12" fill="#2a2a2a" stroke="#555" stroke-width="1.200"/><circle cx="935" cy="165.500" r="8.900" fill="none" stroke="#000" stroke-width="4.600"/><circle cx="935" cy="165.500" r="6.300" fill="#3a3a3a" stroke="#555" stroke-width="1"/><circle cx="947.200" cy="179" r="12" fill="#2a2a2a" stroke="#555" stroke-width="1.200"/><circle cx="947.200" cy="179" r="11" fill="#ececec"/><circle cx="928.600" cy="185" r="6" fill="#f6e6ea" stroke="#2c2c2c" stroke-width="1"/><path d="M924.600 189L932.600 181" stroke="#e07a90" stroke-width="2.200"/><path d="M949 155Q956 155 958.500 162.500" fill="none" stroke="#8c8c8c" stroke-width="1.200"/><path d="M947.500 155L951 152.500V157.500ZM959 165L956 161.500H961Z" fill="#8c8c8c"/><path d="M971 168.500L981 158.500" stroke="#d8d8d8" stroke-width="3.200" stroke-linecap="round"/><ellipse cx="984" cy="156" rx="4.600" ry="3.600" transform="rotate(-45 984 156)" fill="#d98a78"/><circle cx="985" cy="154.700" r="1.500" fill="#eeb0a0"/><circle cx="997.200" cy="160.700" r="7.200" fill="#2c2c2c"/><circle cx="997.200" cy="160.700" r="6.200" fill="#ff0000"/><rect x="1138" y="165" width="29" height="14.500" fill="#000"/><rect x="1153" y="166" width="13" height="12.500" fill="#fff"/><circle cx="933" cy="355" r="7.300" fill="#2c2c2c"/><circle cx="933" cy="355" r="6.200" fill="#f2f2f2"/><rect x="947" y="351" width="140" height="8.500" rx="4.200" fill="url(#op)"/><circle cx="1093" cy="355" r="4.600" fill="#2c2c2c" stroke="#f2f2f2" stroke-width="1.500"/><path d="M1151.800 352L1155 355.300L1158.200 352" fill="none" stroke="#f0f0f0" stroke-width="1.200"/></svg>
<div class="lbl" style="left:8px;top:301px;line-height:16px;font-size:10.500px;color:#c0c0c0">不透明度:</div>
<div class="field" style="left:55px;top:300px;width:54px;height:18px;line-height:18px;padding-left:5px;font-size:11.700px;background:#2a2a2a;color:#f0f0f0">100 %</div>
<div class="field" style="left:114px;top:300px;width:107px;height:18px;line-height:17px;padding:1px 0 0 4px;font-size:11.500px;background:#454545;color:#fff">正常</div>
<div class="abs" style="left:247px;top:301px;width:15px;height:16px;background:#2a2a2a"></div>
<div class="abs" style="left:0;top:324px;width:271px;height:56px;background:#2d2d2d"></div>
<div class="abs" style="left:0;top:324px;width:252px;height:38px;background:#4b6f9b;border:1px solid #0a0a0a"></div>
<div class="abs" style="left:17px;top:324px;width:38px;height:38px;background:#2b2b2b;border:1px solid #0a0a0a;box-shadow:inset 0 0 0 1px #4b6f9b"></div>
<div class="abs" style="left:58px;top:335.5px;line-height:17px;font-size:12px;color:#fff;white-space:nowrap">背景</div>
<div class="abs" style="left:5px;top:382px;width:20px;height:20px;background:#2a2a2a"></div>
<svg class="abs" style="left:0;top:293px" width="271" height="115" viewBox="907 400 271 115"><path d="M1006 414L1009.500 417.500L1013 414" fill="none" stroke="#f0f0f0" stroke-width="1.400"/><path d="M1117 414L1120.500 417.500L1124 414" fill="none" stroke="#f0f0f0" stroke-width="1.400"/><rect x="1138.900" y="410.300" width="2.200" height="3" fill="#a6a6a6" transform="rotate(0 1140 416)"/><rect x="1138.900" y="410.300" width="2.200" height="3" fill="#a6a6a6" transform="rotate(45 1140 416)"/><rect x="1138.900" y="410.300" width="2.200" height="3" fill="#a6a6a6" transform="rotate(90 1140 416)"/><rect x="1138.900" y="410.300" width="2.200" height="3" fill="#a6a6a6" transform="rotate(135 1140 416)"/><rect x="1138.900" y="410.300" width="2.200" height="3" fill="#a6a6a6" transform="rotate(180 1140 416)"/><rect x="1138.900" y="410.300" width="2.200" height="3" fill="#a6a6a6" transform="rotate(225 1140 416)"/><rect x="1138.900" y="410.300" width="2.200" height="3" fill="#a6a6a6" transform="rotate(270 1140 416)"/><rect x="1138.900" y="410.300" width="2.200" height="3" fill="#a6a6a6" transform="rotate(315 1140 416)"/><circle cx="1140" cy="416" r="3" fill="none" stroke="#a6a6a6" stroke-width="2.200"/><rect x="1157.500" y="415" width="8" height="6.500" fill="#a6a6a6"/><path d="M1159.200 415V412.800A2.300 2.300 0 0 1 1163.800 412.800V415" fill="none" stroke="#a6a6a6" stroke-width="1.300"/><g fill="#a9bdd4"><rect x="912.0" y="444.5" width="2.200" height="2.200"/><rect x="912.0" y="448.9" width="2.200" height="2.200"/><rect x="912.0" y="453.3" width="2.200" height="2.200"/><rect x="914.2" y="446.7" width="2.200" height="2.200"/><rect x="914.2" y="451.1" width="2.200" height="2.200"/><rect x="916.4" y="444.5" width="2.200" height="2.200"/><rect x="916.4" y="448.9" width="2.200" height="2.200"/><rect x="916.4" y="453.3" width="2.200" height="2.200"/><rect x="918.6" y="446.7" width="2.200" height="2.200"/><rect x="918.6" y="451.1" width="2.200" height="2.200"/></g><rect x="1119.500" y="449.500" width="9" height="6.500" fill="#aeae94"/><path d="M1121.500 449.500V447.200A2.500 2.500 0 0 1 1126.500 447.200V449.500" fill="none" stroke="#aeae94" stroke-width="1.300"/><circle cx="1143" cy="450" r="4.800" fill="#bcbcbc"/><rect x="915.500" y="492.500" width="9" height="9" rx="1" fill="none" stroke="#adadad" stroke-width="1.300"/><path d="M926.500 496V503.500H919" fill="none" stroke="#adadad" stroke-width="1.300"/><path d="M929 499V506H922" fill="none" stroke="#8a8a8a" stroke-width="1.300"/><rect x="1012" y="493" width="14" height="12.500" fill="#adadad"/><circle cx="1019" cy="499.200" r="3.300" fill="#2e2e2e"/><circle cx="1039" cy="499.500" r="6.300" fill="none" stroke="#adadad" stroke-width="1.200"/><path d="M1034.500 503.500A6 6 0 0 0 1043.500 495.500Z" fill="#adadad"/><text x="1053" y="503.500" font-family="'Liberation Sans',sans-serif" font-size="10.500" font-weight="bold" fill="#adadad" textLength="11.500">fX</text><rect x="1053" y="492" width="11.500" height="1.200" fill="#adadad"/><rect x="1053" y="505.500" width="11.500" height="1.200" fill="#adadad"/><path d="M1076.500 493H1083.500L1086 506H1073.500ZM1080 493L1079.500 506M1075.300 497.300H1084.500M1074.500 501.600H1085.300" fill="none" stroke="#adadad" stroke-width="1.100"/><path d="M1118.500 494.500H1126.500V506H1118.500Z" fill="none" stroke="#adadad" stroke-width="1.300"/><path d="M1120.500 498H1124.500M1120.500 500.500H1124.500M1120.500 503H1124.500" stroke="#adadad" stroke-width="1"/><path d="M1126.500 493H1131M1128.800 490.800V495.300" stroke="#adadad" stroke-width="1.200"/><rect x="1137.500" y="492.500" width="10.500" height="13.500" fill="none" stroke="#adadad" stroke-width="1.200"/><g fill="#adadad"><rect x="1139.5" y="494.5" width="2.200" height="2.300"/><rect x="1139.5" y="499.5" width="2.200" height="2.300"/><rect x="1141.8" y="497.0" width="2.200" height="2.300"/><rect x="1141.8" y="502.0" width="2.200" height="2.300"/><rect x="1144.1" y="494.5" width="2.200" height="2.300"/><rect x="1144.1" y="499.5" width="2.200" height="2.300"/></g><path d="M1158.500 495.500H1168.500V504Q1168.500 506.500 1166 506.500H1161Q1158.500 506.500 1158.500 504ZM1157 494H1170M1161 492.500H1166M1161.800 498V503.500M1165.200 498V503.500" fill="none" stroke="#adadad" stroke-width="1.200"/></svg>
<div class="field" style="left:84px;top:448px;width:64px;height:19px;line-height:19px;padding:1px 0 0 5.500px;font-size:12px;background:#2e2e2e;color:#a8a8a8">19 px</div>
<div class="field" style="left:179px;top:448px;width:63px;height:19px;line-height:19px;padding:1px 0 0 5.500px;font-size:12px;background:#2e2e2e;color:#a8a8a8">112 px</div>
<div class="field" style="left:84px;top:472px;width:64px;height:19px;line-height:19px;padding:1px 0 0 5.500px;font-size:12px;background:#2e2e2e;color:#a8a8a8">0 px</div>
<div class="field" style="left:179px;top:472px;width:63px;height:19px;line-height:19px;padding:1px 0 0 5.500px;font-size:12px;background:#2e2e2e;color:#a8a8a8">100 px</div>
<div class="field" style="left:84px;top:502px;width:64px;height:19px;line-height:19px;padding:1px 0 0 5.500px;font-size:12px;background:#2e2e2e;color:#a8a8a8">0 °</div>
<div class="field" style="left:179px;top:502px;width:63px;height:19px;line-height:19px;padding:1px 0 0 5.500px;font-size:12px;background:#2e2e2e;color:#a8a8a8">0 °</div>
<div class="lbl" style="left:70px;top:449px;line-height:19px;font-size:12px;color:#848484">X:</div>
<div class="lbl" style="left:159px;top:449px;line-height:19px;font-size:12px;color:#848484">W:</div>
<div class="lbl" style="left:71px;top:473px;line-height:19px;font-size:12px;color:#848484">Y:</div>
<div class="lbl" style="left:162px;top:473px;line-height:19px;font-size:12px;color:#848484">H:</div>
<div class="lbl" style="left:70px;top:503px;line-height:19px;font-size:12px;color:#848484">R:</div>
<div class="lbl" style="left:164px;top:503px;line-height:19px;font-size:12px;color:#848484">S:</div>
<div class="abs" style="left:199px;top:530px;width:29px;height:26px;background:#434343"></div>
<div class="abs" style="left:229px;top:530px;width:14px;height:26px;background:#434343"></div>
<svg class="abs" style="left:0;top:438px" width="271" height="125" viewBox="907 545 271 125"><rect x="927" y="580" width="30" height="30" fill="#696969"/><rect x="924.5" y="577.5" width="5" height="5" fill="#696969"/><rect x="939.5" y="577.5" width="5" height="5" fill="#696969"/><rect x="954.5" y="577.5" width="5" height="5" fill="#696969"/><rect x="924.5" y="592.5" width="5" height="5" fill="#696969"/><rect x="954.5" y="592.5" width="5" height="5" fill="#696969"/><rect x="924.5" y="607.5" width="5" height="5" fill="#696969"/><rect x="939.5" y="607.5" width="5" height="5" fill="#696969"/><rect x="954.5" y="607.5" width="5" height="5" fill="#696969"/><path d="M1045 617L1048.500 620.500L1052 617M1138.500 617L1142 620.500L1145.500 617" fill="none" stroke="#b0b0b0" stroke-width="1.400"/><path d="M1139.500 648.500L1143 652L1146.500 648.500" fill="none" stroke="#f0f0f0" stroke-width="1.400"/><rect x="1113.500" y="643.500" width="14" height="14" fill="none" stroke="#5c5c5c" stroke-width="1.200" stroke-dasharray="4 2"/><rect x="1112" y="650" width="8.500" height="8.500" rx="1.500" fill="#5c5c5c"/><path d="M1162 574V568.500H1168V574M1162 580V585.500H1168V580" fill="none" stroke="#c8c8c8" stroke-width="1.200"/><path d="M1165 573V581" stroke="#c8c8c8" stroke-width="1" stroke-dasharray="1.500 1"/></svg>
</div>
<div id="status" class="abs"><span class="abs" style="left:22px;top:4px;font-size:12px;line-height:18px;color:#c4c4c4;white-space:nowrap">选取项已锁定，无法移动。解锁选取项对其进行变换。</span><svg class="abs" style="left:1164px;top:13px" width="12" height="12"><g fill="#8a8a8a"><rect x="8" y="0" width="1.500" height="1.500"/><rect x="5" y="3" width="1.500" height="1.500"/><rect x="8" y="3" width="1.500" height="1.500"/><rect x="2" y="6" width="1.500" height="1.500"/><rect x="5" y="6" width="1.500" height="1.500"/><rect x="8" y="6" width="1.500" height="1.500"/></g></svg></div>
<div class="abs" style="left:0;top:698px;width:1178px;height:1px;background:#262626"></div>
<div class="abs" style="left:0;top:33px;width:2px;height:666px;background:#303030"></div>
<div class="abs" style="left:1176px;top:33px;width:2px;height:666px;background:#2c2c2c"></div>
</body>
</html>
